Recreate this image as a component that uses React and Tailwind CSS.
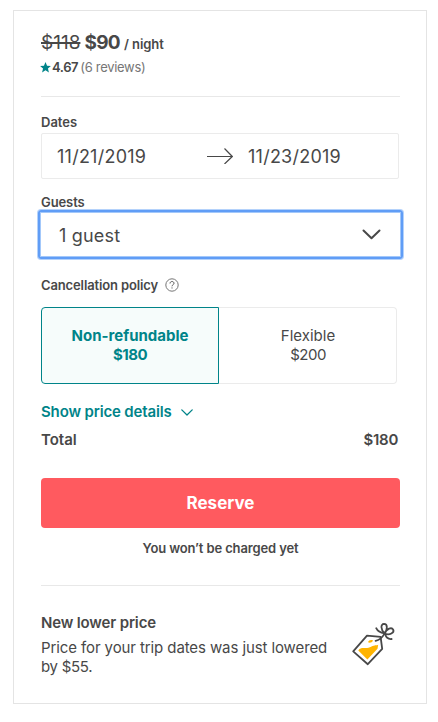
function Star() {
  return (
    <svg className="ml-[-1px] mr-[1px] h-[11px] w-[11px] shrink-0" viewBox="0 0 10 10" fill="#008489">
      <path d="M5 .1 6.4 3.35 9.9 3.65 7.25 5.95 8.1 9.5 5 7.6 1.9 9.5 2.75 5.95.1 3.65 3.6 3.35Z" />
    </svg>
  );
}

function PriceTag() {
  return (
    <svg className="h-[52px] w-[53px] shrink-0" viewBox="347 618 53 52" fill="none" stroke="#484848" strokeWidth="1.8" strokeLinecap="round" strokeLinejoin="round">
      <path d="M367 635.6 353.2 651.4 367.8 664.2 382.2 648.9 380.6 636.8Z" />
      <path d="M358.3 650.4C361.5 645.8 366 650 371.5 646.6C374.5 644.8 377 645.8 378.2 644.8L377.5 648.8 367.4 659.4Z" fill="#ffb400" stroke="none" />
      <path d="M368 642.2C368.6 640.2 371 639.7 373 640.4C372.1 642.3 370 643.3 368 642.2Z" fill="#ffb400" stroke="none" />
      <path d="M375.6 640.8C379.2 640.2 382 638 384.6 633.6" />
      <path d="M384.6 633.6C380.6 629.6 380.4 624 384 623.9C387.8 624 387.6 629.2 384.6 633.6C386.6 628.2 391.8 627 393.2 629.6C394.6 632.8 389.8 635.6 384.6 633.6" />
      <path d="M384.4 633.4C380.6 632.8 377.6 631.2 376.2 628.2M385 633.8C386 637.2 388.4 639.4 391.6 639" />
    </svg>
  );
}

export default function App() {
  return (
    <div className="h-[722px] w-[438px] bg-white pl-[13px] pt-[10px] font-['Inter',sans-serif] text-[#484848]">
      <div className="flex h-[694px] w-[414px] flex-col border border-[#e4e4e4] pl-[27px] pr-[26px] pt-5">
        <div className="flex h-6 items-baseline whitespace-nowrap text-[19px] leading-6">
          <span className="line-through decoration-[1.5px]">$118</span>
          <span className="ml-[4px] font-bold tracking-[-0.7px]">$90</span>
          <span className="ml-[4px] text-[13px] font-semibold tracking-[-0.05px]">/ night</span>
        </div>
        <div className="mt-[3px] flex h-[18px] items-center whitespace-nowrap text-[13px] leading-[18px]">
          <Star />
          <span className="font-semibold tracking-[-0.4px]">4.67</span>
          <span className="ml-[2px] tracking-[-0.3px] text-[#767676]">(6 reviews)</span>
        </div>
        <div className="mt-5 h-px shrink-0 bg-[#e8e8e8]" />

        <div className="mt-4 h-[18px] text-[13px] font-semibold leading-[18px]">Dates</div>
        <div className="mt-[2px] flex h-[46px] w-[358px] shrink-0 items-center rounded-[2px] border border-[#ebebeb] pl-[15px] text-[18px] tracking-[0.25px]">
          <span className="w-[150px]">11/21/2019</span>
          <svg className="h-4 w-[26px]" viewBox="0 0 26 16" fill="none" stroke="#484848" strokeWidth="1.2">
            <path d="M0 8.5H25.2M17.5.5 25.3 8.5 17.5 16" />
          </svg>
          <span className="ml-[15px]">11/23/2019</span>
        </div>

        <div className="mt-[15px] h-4 text-[13px] font-semibold leading-4 tracking-[-0.1px]">Guests</div>
        <div className="ml-[-3px] flex h-[49px] w-[365px] shrink-0 items-center justify-between rounded-[3px] border-2 border-[#609df6] pl-[19px] pr-5 text-[18px] shadow-[inset_0_0_0_1px_#a3c8fa,0_0_0_1px_#b4d2fb]">
          <span className="relative top-px tracking-[0.2px]">1 guest</span>
          <svg className="h-[11px] w-[19px]" viewBox="0 0 19 11" fill="none" stroke="#484848" strokeWidth="2" strokeLinecap="round" strokeLinejoin="round">
            <path d="M1.5 1.5 9.5 9.3 17.5 1.5" />
          </svg>
        </div>

        <div className="mt-[17px] flex h-[18px] items-center text-[13px] font-semibold leading-[18px]">
          <span className="w-[118px] whitespace-nowrap tracking-[-0.13px]">Cancellation policy</span>
          <svg className="ml-[6px] h-[14px] w-[14px]" viewBox="0 0 14 14" fill="none" stroke="#767676" strokeWidth="1">
            <circle cx="7" cy="7" r="6.2" />
            <path d="M5 5.5C5.1 4.2 5.9 3.5 7 3.5C8.2 3.5 9 4.3 9 5.3C9 6.7 7 6.7 7 8.3M7 9.4V10.5" stroke="#595959" />
          </svg>
        </div>
        <div className="mt-[13px] flex h-[77px] w-[356px] shrink-0 text-center text-[15px] leading-[19px]">
          <div className="flex w-[178px] flex-col justify-center rounded-l-[4px] border border-[#008489] bg-[#f6fcfb] pb-[2px] font-bold text-[#008489]">
            <span>Non-refundable</span>
            <span className="tracking-[-0.5px]">$180</span>
          </div>
          <div className="flex w-[178px] flex-col justify-center rounded-r-[4px] border border-l-0 border-[#ebebeb] pb-[2px] pl-px">
            <span>Flexible</span>
            <span className="tracking-[-0.5px]">$200</span>
          </div>
        </div>

        <div className="mt-[18px] flex h-5 items-center text-[15px] font-semibold leading-5 text-[#008489]">
          <span className="w-[132px] whitespace-nowrap tracking-[-0.15px]">Show price details</span>
          <svg className="ml-[8px] h-[7px] w-3" viewBox="0 0 12 7" fill="none" stroke="#008489" strokeWidth="1.3" strokeLinecap="round" strokeLinejoin="round">
            <path d="M.8.9 6 6 11.2.9" />
          </svg>
        </div>
        <div className="mt-2 flex h-5 w-[357px] justify-between text-[15px] font-semibold leading-5">
          <span>Total</span>
          <span className="tracking-[-0.3px]">$180</span>
        </div>

        <button className="mt-[28px] h-[50px] w-[359px] shrink-0 rounded-[4px] bg-[#ff5a5f] pt-[2px] text-[17px] font-bold text-white">Reserve</button>
        <div className="mt-[11px] h-[18px] text-center text-[13px] font-semibold leading-[18px] tracking-[-0.13px]">You won’t be charged yet</div>
        <div className="mt-7 h-px shrink-0 bg-[#e8e8e8]" />

        <div className="mt-[27px] flex justify-between">
          <div className="w-[300px] whitespace-nowrap text-[15px] leading-[19px]">
            <div className="h-5 font-semibold leading-5 tracking-[-0.15px]">New lower price</div>
            <div className="mt-[5px] tracking-[-0.1px]">
              Price for your trip dates was just lowered
              <br />
              <span className="tracking-[-0.3px]">by $55.</span>
            </div>
          </div>
          <div className="mt-[5px]">
            <PriceTag />
          </div>
        </div>
      </div>
    </div>
  );
}
